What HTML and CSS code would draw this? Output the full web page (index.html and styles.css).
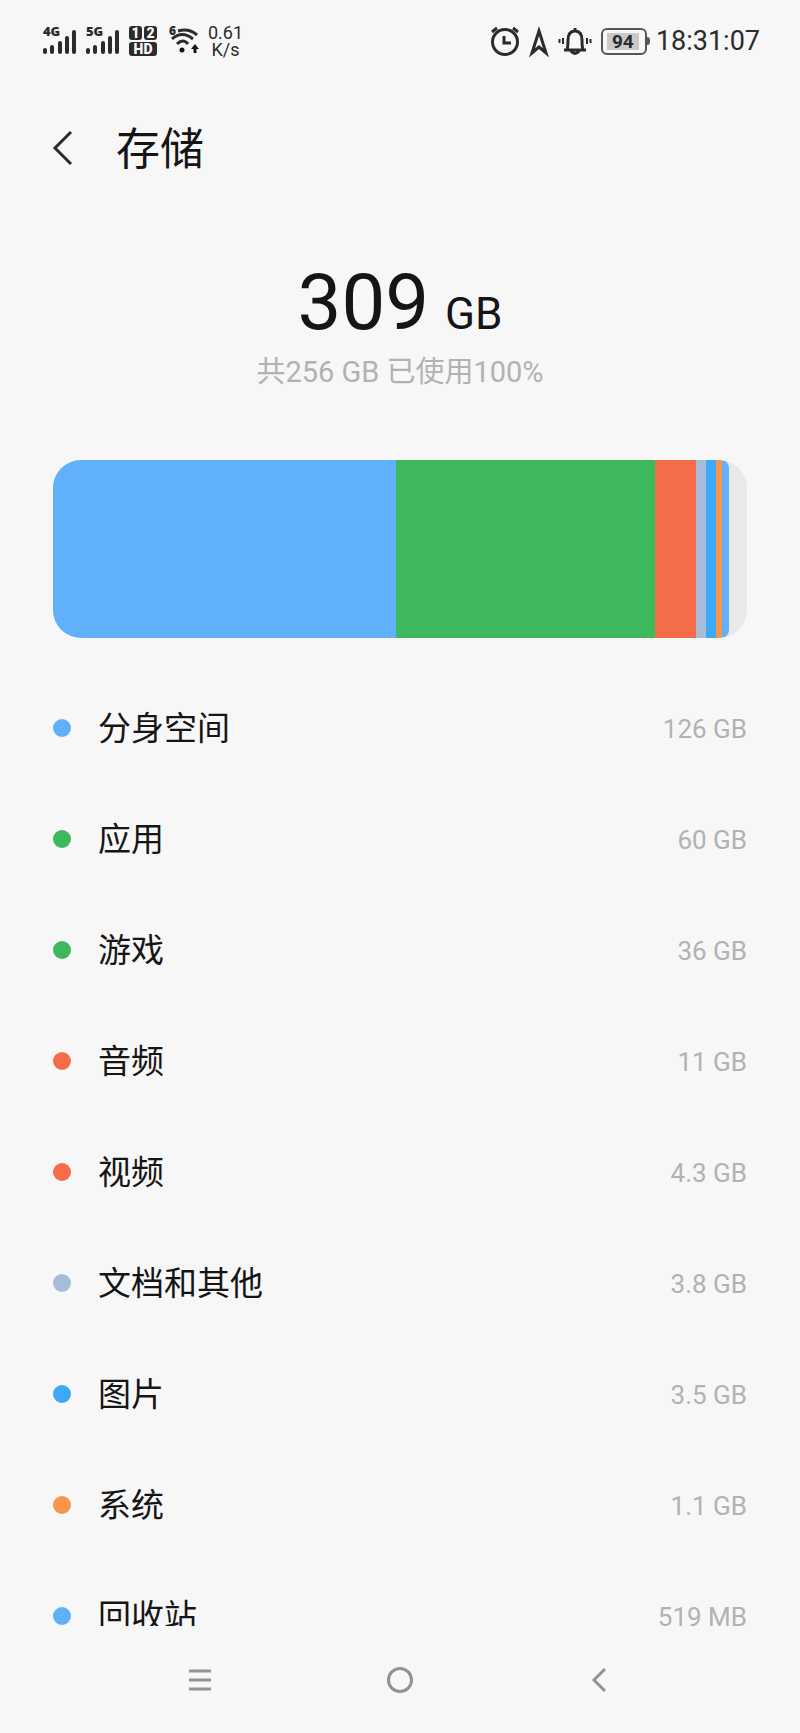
FILE: index.html
```
<!DOCTYPE html>
<html lang="zh-CN">
<head>
<meta charset="UTF-8">
<meta name="viewport" content="width=device-width, initial-scale=1.0">
<title>存储</title>
<link rel="stylesheet" href="styles.css">
</head>
<body>

<div class="status">
    <div class="status-left">
        <svg class="signal" width="34" height="30" viewBox="0 0 34 30">
            <text x="0" y="10">4G</text>
            <path d="M2 24v2M9 21v5M17 17v9M24 12v14M31 6v20"/>
        </svg>
        <svg class="signal" width="34" height="30" viewBox="0 0 34 30">
            <text x="0" y="10">5G</text>
            <path d="M2 24v2M9 21v5M17 17v9M24 12v14M31 6v20"/>
        </svg>
        <div class="sim">
            <span>1</span><span>2</span><span class="hd">HD</span>
        </div>
        <svg class="wifi" width="30" height="30" viewBox="0 0 30 30">
            <text x="0" y="9">6</text>
            <path d="M9 5q11-3 19 4M3 13q10-9 21 0M8 18q6-6 11 0"/>
            <circle cx="13" cy="24" r="2.500"/>
            <path class="arrow" d="M26 18l4 5h-2.500v4h-3v-4H22z"/>
        </svg>
        <div class="speed">0.61<br>K/s</div>
    </div>
    <div class="status-right">
        <svg width="30" height="30" viewBox="0 0 30 30">
            <circle cx="15" cy="16" r="12.500"/>
            <path d="M14 10v7h7M2 6l5-4M28 6l-5-4"/>
        </svg>
        <svg width="20" height="30" viewBox="0 0 20 30">
            <path d="M10 5L3 27l7-6 7 6z"/>
        </svg>
        <svg class="bell" width="34" height="30" viewBox="0 0 34 30">
            <path d="M6 24h22M9 24q1-3 1-10c0-7 3-9 7-9s7 2 7 9q0 7 1 10M17 2v3M13 25q4 5 8 0"/>
            <path class="thin" d="M5 12v6M29 12v6M1.500 13v4M32.500 13v4"/>
        </svg>
        <div class="battery"><span>94</span></div>
        <time>18:31:07</time>
    </div>
</div>

<header>
    <button class="back" aria-label="返回">
        <svg width="20" height="36" viewBox="0 0 20 36"><path d="M18 2L2 18l16 16"/></svg>
    </button>
    <h1>存储</h1>
</header>

<main>
    <div class="total">309<span>GB</span></div>
    <p class="used">共256 GB 已使用100%</p>

    <div class="bar">
        <div class="bar-used">
            <div class="blue" style="flex-grow: 343"></div>
            <div class="green" style="flex-grow: 259"></div>
            <div class="red" style="flex-grow: 41"></div>
            <div class="gray" style="flex-grow: 10"></div>
            <div class="sky" style="flex-grow: 10"></div>
            <div class="orange" style="flex-grow: 6"></div>
            <div class="blue" style="flex-grow: 7"></div>
        </div>
    </div>

    <ul class="list">
        <li><i class="dot blue"></i><span class="name">分身空间</span><span class="size">126 GB</span></li>
        <li><i class="dot green"></i><span class="name">应用</span><span class="size">60 GB</span></li>
        <li><i class="dot green"></i><span class="name">游戏</span><span class="size">36 GB</span></li>
        <li><i class="dot red"></i><span class="name">音频</span><span class="size">11 GB</span></li>
        <li><i class="dot red"></i><span class="name">视频</span><span class="size">4.3 GB</span></li>
        <li><i class="dot gray"></i><span class="name">文档和其他</span><span class="size">3.8 GB</span></li>
        <li><i class="dot sky"></i><span class="name">图片</span><span class="size">3.5 GB</span></li>
        <li><i class="dot orange"></i><span class="name">系统</span><span class="size">1.1 GB</span></li>
        <li><i class="dot blue"></i><span class="name">回收站</span><span class="size">519 MB</span></li>
    </ul>
</main>

<nav>
    <button aria-label="菜单">
        <svg width="26" height="26" viewBox="0 0 26 26"><path d="M2 4h22M2 13h22M2 22h22"/></svg>
    </button>
    <button aria-label="主页">
        <svg width="26" height="26" viewBox="0 0 26 26"><circle cx="13" cy="13" r="11.500"/></svg>
    </button>
    <button aria-label="返回">
        <svg width="26" height="26" viewBox="0 0 26 26"><path d="M18 2L7 13l11 11"/></svg>
    </button>
</nav>

</body>
</html>
```
FILE: styles.css
```
* { box-sizing: border-box; }
body { font-family: Roboto, "Noto Sans CJK SC", sans-serif; background-color: #f7f7f7; color: #151515; margin: 0; height: 100vh; display: flex; flex-direction: column; }
button { background: none; border: none; padding: 0; cursor: pointer; display: flex; align-items: center; justify-content: center; }
svg { display: block; fill: none; stroke: #2b2b2b; stroke-width: 3; overflow: visible; }

/* status bar */
.status { height: 82px; flex-shrink: 0; padding: 0 40px 0 43px; display: flex; align-items: center; justify-content: space-between; color: #2b2b2b; }
.status-left, .status-right { display: flex; align-items: center; }
.status-left { gap: 9px; }
.status-right { gap: 9px; }
.status text { font-family: "Open Sans", sans-serif; font-size: 13px; font-weight: 800; fill: #2b2b2b; stroke: none; }
.status .wifi text { font-size: 12px; }
.signal { stroke-linecap: round; stroke-width: 4; }
.sim { width: 28px; display: grid; grid-template-columns: 1fr 1fr; gap: 2px; margin-right: 3px; }
.sim span { background: #2b2b2b; color: #f7f7f7; font-size: 14px; line-height: 14px; font-weight: 900; text-align: center; border-radius: 3px; }
.sim .hd { grid-column: span 2; }
.wifi circle, .wifi .arrow { fill: #151515; stroke: none; }
.speed { font-size: 18px; line-height: 17px; text-align: center; }
.status .thin { stroke-width: 2; }
.battery { position: relative; width: 46px; height: 27px; border: 2px solid #555; border-radius: 6px; padding: 3px 4px; }
.battery span { display: block; width: 32px; background: #c9c9c9; font-size: 19px; line-height: 17px; font-weight: 700; text-align: center; }
.battery::after { content: ""; position: absolute; right: -5px; top: 7px; width: 3px; height: 8px; background: #555; border-radius: 0 3px 3px 0; }
time { font-size: 27px; line-height: 32px; }

header { height: 132px; flex-shrink: 0; padding: 0 53px; display: flex; align-items: center; gap: 43px; }
h1 { margin: 0; padding-top: 4px; font-size: 44px; line-height: 64px; font-weight: 400; }

main { flex: 1; min-height: 0; overflow: hidden; padding: 43px 53px 0; }
.total { font-size: 78px; line-height: 92px; text-align: center; }
.total span { margin-left: 16px; font-size: 44px; line-height: 44px; }
.used { margin: 1px 0 0; font-size: 29px; line-height: 44px; color: #b2b2b2; text-align: center; }

.bar { height: 178px; margin-top: 66px; padding-right: 18px; background: #e9e9e9; border-radius: 28px; overflow: hidden; }
.bar-used { display: flex; height: 100%; border-radius: 0 8px 8px 0; overflow: hidden; }
.blue { background: #60b0fc; }
.green { background: #3db85c; }
.red { background: #f56c48; }
.gray { background: #a7bcd8; }
.sky { background: #3ca9f7; }
.orange { background: #f9944e; }

.list { list-style: none; margin: 34px 0 0; padding: 0; }
.list li { height: 111px; display: flex; align-items: center; }
.dot { width: 18px; height: 18px; border-radius: 50%; margin-right: 27px; }
.name { flex: 1; padding-top: 2px; font-size: 33px; line-height: 48px; }
.size { padding-top: 2px; font-size: 26px; line-height: 32px; color: #b2b2b2; }

nav { height: 107px; flex-shrink: 0; padding: 0 100px; display: flex; }
nav button { flex: 1; }
nav svg { stroke: #929292; }
```
